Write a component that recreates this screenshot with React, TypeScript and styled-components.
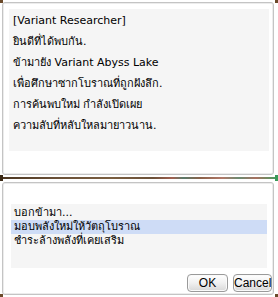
import React from "react";
import styled, { createGlobalStyle } from "styled-components";

const GlobalStyle = createGlobalStyle`
  html, body {
    margin: 0;
    padding: 0;
    background: #ffffff;
  }
  body {
    font-family: Tahoma, "DejaVu Sans", "Noto Sans", sans-serif;
  }
`;

const Frame = styled.div`
  position: relative;
  width: 278px;
  height: 297px;
  box-sizing: border-box;
  padding: 2px 4px 2px 2px;
  display: flex;
  flex-direction: column;
  background: #fff;
  color: #000;
  font-size: 11px;
`;

const Corner = styled.span<{ $pos: "tl" | "tr" | "bl" | "br" }>`
  position: absolute;
  width: 3px;
  height: 3px;
  background: #6b4a2a;
  ${p => (p.$pos[0] === "t" ? "top: 0;" : "bottom: 0;")}
  ${p => (p.$pos[1] === "l" ? "left: 0;" : "right: 0;")}
`;

const Panel = styled.div<{ $height: number; $pad: string }>`
  height: ${p => p.$height}px;
  box-sizing: border-box;
  border: 1px solid #c4c4c4;
  border-radius: 3px;
  box-shadow: inset 0 0 0 1px #ececec;
  padding: ${p => p.$pad};
  display: flex;
  flex-direction: column;
`;

const Dialogue = styled.div`
  background: #f5f5f5;
  height: 140px;
  padding: 1px 4px;
  line-height: 21px;
`;

const Line = styled.div`
  white-space: nowrap;
`;

const Divider = styled.div`
  position: relative;
  height: 2px;
  margin: 2px -4px 3px -2px;
  background: linear-gradient(
    90deg,
    #4a3520 0%,
    #6a5037 20%,
    #7a5e40 40%,
    #6b5038 55%,
    #a06050 62%,
    #5a7a6a 66%,
    #8a6048 72%,
    #b07868 80%,
    #6a8a70 86%,
    #a87060 92%,
    #40a060 100%
  );
`;

const Knob = styled.span<{ $side: "l" | "r"; $color: string }>`
  position: absolute;
  top: -2px;
  ${p => (p.$side === "l" ? "left: 0;" : "right: 0;")}
  width: 3px;
  height: 6px;
  background: ${p => p.$color};
`;

const ListBox = styled.div`
  background: #f5f5f5;
  height: 64px;
  padding-top: 2px;
  box-sizing: border-box;
`;

const Option = styled.div<{ $active?: boolean }>`
  height: 14px;
  line-height: 14px;
  padding-left: 3px;
  white-space: nowrap;
  background: ${p => (p.$active ? "#cedcf6" : "transparent")};
`;

const Buttons = styled.div`
  display: flex;
  justify-content: flex-end;
  gap: 5px;
  margin-top: 6px;
  margin-right: -5px;
`;

const Button = styled.button<{ $w: number }>`
  width: ${p => p.$w}px;
  height: 18px;
  padding: 0;
  font-family: "Liberation Sans", Arial, sans-serif;
  font-size: 12px;
  line-height: 16px;
  color: #000;
  border: 1px solid #9a9a9a;
  border-radius: 4px;
  background: linear-gradient(180deg, #ffffff 0%, #f0f0f0 50%, #d8d8d8 100%);
  box-shadow: inset 0 0 0 1px #fafafa;
`;

const lines = [
  "[Variant Researcher]",
  "ยินดีที่ได้พบกัน.",
  "ข้ามายัง Variant Abyss Lake",
  "เพื่อศึกษาซากโบราณที่ถูกฝังลึก.",
  "การค้นพบใหม่ กำลังเปิดเผย",
  "ความลับที่หลับใหลมายาวนาน.",
];

const options = ["บอกข้ามา...", "มอบพลังใหม่ให้วัตถุโบราณ", "ชำระล้างพลังที่เคยเสริม"];

export default function App() {
  return (
    <>
      <GlobalStyle />
      <Frame>
        <Corner $pos="tl" />
        <Corner $pos="tr" />
        <Corner $pos="bl" />
        <Corner $pos="br" />
        <Panel $height={174} $pad="6px 4px 0 6px">
          <Dialogue>
            {lines.map((l, i) => (
              <Line key={i}>{l}</Line>
            ))}
          </Dialogue>
        </Panel>
        <Divider>
          <Knob $side="l" $color="#3a2815" />
          <Knob $side="r" $color="#3a9a5a" />
        </Divider>
        <Panel $height={114} $pad="21px 6px 0 8px">
          <ListBox>
            {options.map((o, i) => (
              <Option key={i} $active={i === 1}>
                {o}
              </Option>
            ))}
          </ListBox>
          <Buttons>
            <Button $w={41}>OK</Button>
            <Button $w={39}>Cancel</Button>
          </Buttons>
        </Panel>
      </Frame>
    </>
  );
}
